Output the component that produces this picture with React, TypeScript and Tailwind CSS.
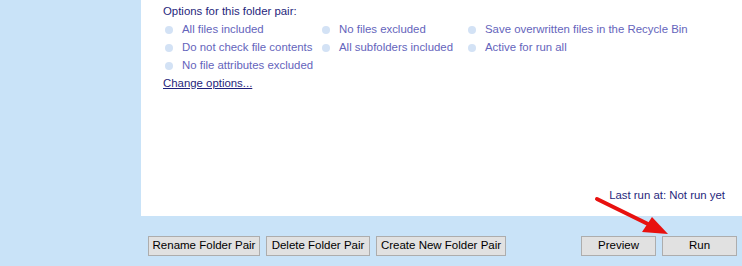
const options = [
  ['All files included', 'No files excluded', 'Save overwritten files in the Recycle Bin'],
  ['Do not check file contents', 'All subfolders included', 'Active for run all'],
  ['No file attributes excluded'],
];

function Option({ label, width }: { label: string; width: string }) {
  return (
    <div className={`flex items-center whitespace-nowrap ${width}`}>
      <span className="ml-[2px] mr-[9px] h-[8px] w-[8px] shrink-0 rounded-full bg-[#d3e2f5]" />
      <span className="text-[#6464bc]">{label}</span>
    </div>
  );
}

function Button({ children, width }: { children: string; width: string }) {
  return (
    <button className={`${width} h-[20px] whitespace-nowrap border border-[#adadad] bg-[#e1e1e1] text-[11.5px] leading-none text-black`}>
      {children}
    </button>
  );
}

export default function App() {
  return (
    <div className="relative flex h-[266px] w-[742px] flex-col bg-[#c9e3f8] font-['Liberation_Sans',sans-serif] text-[11.4px]">
      <div className="flex h-[216px]">
        <div className="w-[141px]" />
        <div className="flex flex-1 flex-col bg-white pl-[22px] pt-[2px]">
          <div className="leading-[19px] text-[#1f1f7c]">Options for this folder pair:</div>
          {options.map((row, i) => (
            <div key={i} className="flex h-[18px]">
              {row.map((label, j) => (
                <Option key={label} label={label} width={j === 0 ? 'w-[157px]' : j === 1 ? 'w-[146px]' : ''} />
              ))}
            </div>
          ))}
          <a className="self-start leading-[17px] text-[#1f1f7c] underline">Change options...</a>
          <div className="mt-auto mb-[12px] self-end pr-[17px] text-[#1f1f7c]">Last run at: Not run yet</div>
        </div>
      </div>
      <div className="flex pl-[148px] pr-[5px] pt-[20px]">
        <div className="flex gap-[6px]">
          <Button width="w-[112px]">Rename Folder Pair</Button>
          <Button width="w-[104px]">Delete Folder Pair</Button>
          <Button width="w-[130px]">Create New Folder Pair</Button>
        </div>
        <div className="ml-auto flex gap-[6px]">
          <Button width="w-[75px]">Preview</Button>
          <Button width="w-[75px]">Run</Button>
        </div>
      </div>
      <svg className="absolute left-0 top-0" width="742" height="266" viewBox="0 0 742 266">
        <line x1="597" y1="199" x2="652" y2="226" stroke="#e8110f" strokeWidth="4" strokeLinecap="round" />
        <polygon points="668,234 642,232 652,217" fill="#e8110f" />
      </svg>
    </div>
  );
}
